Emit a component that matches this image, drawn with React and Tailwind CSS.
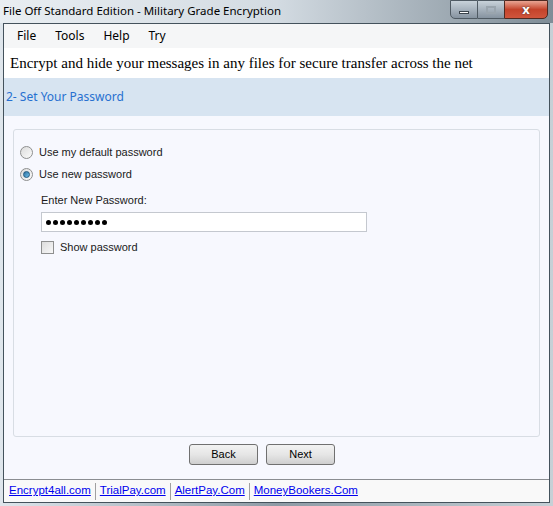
import React from 'react'

const ui = { fontFamily: '"Noto Sans", "DejaVu Sans", sans-serif' }
const ms = { fontFamily: '"Liberation Sans", Arial, sans-serif' }

function Radio({ checked, label }) {
  return (
    <div className='flex items-center h-[22px]'>
      <span className='w-[13px] h-[13px] rounded-full border border-[#8e8f8f] bg-gradient-to-br from-[#dcdcdc] to-[#fbfbfb] flex items-center justify-center'>
        {checked && <span className='w-[7px] h-[7px] rounded-full bg-gradient-to-br from-[#2f6f9f] to-[#6fc2ec] border border-[#1d5880]' />}
      </span>
      <span className='ml-[6px] text-[11px] text-[#1a1a1a]' style={ms}>{label}</span>
    </div>
  )
}

export default function App() {
  const links = ['Encrypt4all.com', 'TrialPay.com', 'AlertPay.Com', 'MoneyBookers.Com']

  return (
    <div className='w-[553px] h-[506px] flex flex-col bg-gradient-to-r from-[#dfe6ec] via-[#8e9ba5] to-[#c6d0d6] overflow-hidden' style={ui}>
      {/* title bar */}
      <div className='h-[23px] flex items-start shrink-0 bg-gradient-to-r from-[#e9eef2] via-[#d3dbe2] to-[#7f8d97]'>
        <span className='pl-[3px] pt-[3px] text-[11.5px] text-black leading-[16px]'>File Off Standard Edition - Military Grade Encryption</span>
        <div className='ml-auto mr-[5px] flex h-[19px]'>
          <div className='w-[28px] h-full border border-[#4f5a63] rounded-bl-[5px] bg-gradient-to-b from-[#c8d2da] to-[#8693a0] flex items-center justify-center'>
            <span className='w-[10px] h-[3px] bg-white border border-[#3b444c] mt-[5px]' />
          </div>
          <div className='w-[26px] h-full border-y border-[#4f5a63] bg-gradient-to-b from-[#c8d2da] to-[#8693a0] flex items-center justify-center'>
            <span className='w-[10px] h-[8px] border-2 border-[#9aa5ae]' />
          </div>
          <div className='w-[44px] h-full border border-[#4f2a22] rounded-br-[5px] bg-gradient-to-b from-[#e8a493] via-[#c4432b] to-[#d0553c] flex items-center justify-center'>
            <span className='text-white font-bold text-[13px] leading-none' style={{ textShadow: '0 0 2px #333' }}>x</span>
          </div>
        </div>
      </div>

      {/* client */}
      <div className='flex-1 mx-[3px] mb-[3px] border border-[#44525c] flex flex-col bg-white'>
        <div className='h-[24px] bg-[#f5f6f7] flex items-center text-[12px] text-black shrink-0'>
          <span className='ml-[13px]'>File</span>
          <span className='ml-[19px]'>Tools</span>
          <span className='ml-[19px]'>Help</span>
          <span className='ml-[19px]'>Try</span>
        </div>
        <div className='h-[30px] bg-white flex items-center shrink-0'>
          <span className='ml-[6px] text-[15px] text-black' style={{ fontFamily: '"Liberation Serif", serif' }}>
            Encrypt and hide your messages in any files for secure transfer across the net
          </span>
        </div>
        <div className='h-[38px] bg-[#d7e4f1] flex items-center shrink-0'>
          <span className='ml-[2px] text-[12px] text-[#2770d0]'>2- Set Your Password</span>
        </div>

        <div className='flex-1 bg-[#f7f8fe] flex flex-col px-[9px] pt-[13px]'>
          <div className='h-[308px] border border-[#d8dde4] rounded-[3px] pl-[6px] pt-[11px]'>
            <Radio label='Use my default password' />
            <Radio checked label='Use new password' />
            <div className='ml-[21px] mt-[7px]'>
              <div className='text-[11px] text-[#1a1a1a] leading-[16px]' style={ms}>Enter New Password:</div>
              <div className='mt-[4px] w-[326px] h-[20px] bg-white border border-[#c4c8cf] flex items-center gap-[2px] pl-[4px]'>
                {Array.from({ length: 9 }).map((_, i) => (
                  <span key={i} className='w-[5px] h-[5px] rounded-full bg-black' />
                ))}
              </div>
              <div className='mt-[7px] flex items-center'>
                <span className='w-[13px] h-[13px] border border-[#8e8f8f] bg-gradient-to-br from-[#dcdcdc] to-[#f8f8f8]' />
                <span className='ml-[6px] text-[11px] text-[#1a1a1a]' style={ms}>Show password</span>
              </div>
            </div>
          </div>
          <div className='flex gap-[8px] mt-[7px] ml-[176px]'>
            {['Back', 'Next'].map((b) => (
              <button key={b} className='w-[69px] h-[21px] rounded-[3px] border border-[#707070] bg-gradient-to-b from-[#f2f2f2] via-[#e6e6e6] to-[#cfcfcf] text-[11px] text-black' style={ms}>
                {b}
              </button>
            ))}
          </div>
        </div>

        <div className='h-[23px] border-t border-[#8a8d91] bg-[#f9f9f9] flex items-center shrink-0' style={ms}>
          {links.map((l, i) => (
            <React.Fragment key={l}>
              {i > 0 && <span className='w-px h-[17px] bg-[#a0a0a0] mx-[4px]' />}
              <span className={`text-[11.5px] text-[#0000ee] underline ${i === 0 ? 'ml-[5px]' : ''}`}>{l}</span>
            </React.Fragment>
          ))}
        </div>
      </div>
    </div>
  )
}
